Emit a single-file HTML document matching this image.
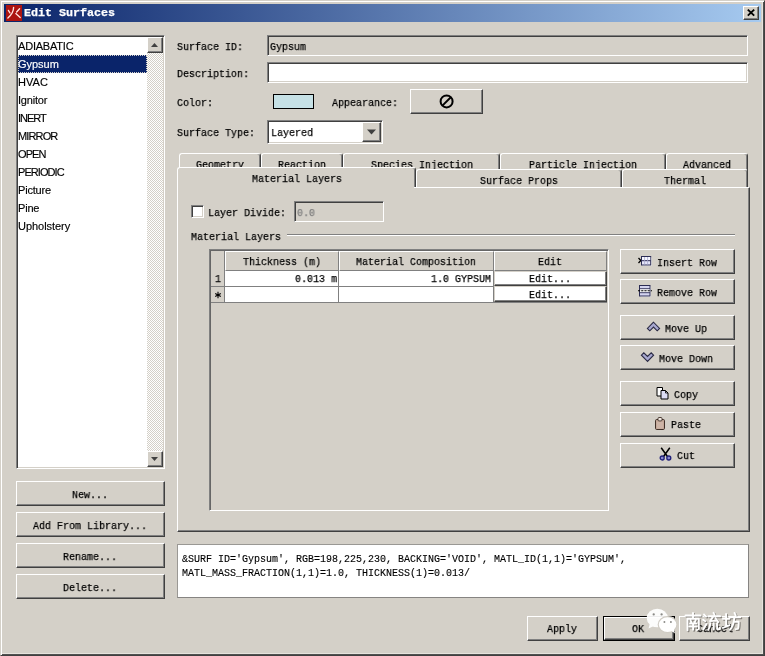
<!DOCTYPE html>
<html>
<head>
<meta charset="utf-8">
<title>Edit Surfaces</title>
<style>
*{margin:0;padding:0;box-sizing:border-box}
html,body{width:765px;height:656px;overflow:hidden;background:#d4d0c8}
body{position:relative;font-family:"Liberation Mono",monospace;font-size:13px;color:#000}
.a{position:absolute}
/* SimSun-like 6px-advance text: Liberation Mono 13px squeezed horizontally */
.t{will-change:transform;position:absolute;font:11.5px/14px "Liberation Mono",monospace;transform:scaleX(.8696);transform-origin:0 0;white-space:pre;color:#000;margin-top:1px;-webkit-text-stroke:.25px}
.tb{font-weight:bold;color:#fff;transform:scaleX(1.0145)}
.ts{font-size:10px;transform:none;-webkit-text-stroke:.12px}
.g{color:#808080}
.l{will-change:transform;position:absolute;font:11px/18px "Liberation Sans",sans-serif;white-space:pre;letter-spacing:-0.2px;color:#000;left:18px;-webkit-text-stroke:.15px}
.btn{position:absolute;background:#d4d0c8;border:1px solid;border-color:#fff #404040 #404040 #fff;box-shadow:inset -1px -1px 0 #808080}
.sunk{position:absolute;border:1px solid;border-color:#808080 #fff #fff #808080;box-shadow:inset 1px 1px 0 #404040,inset -1px -1px 0 #d4d0c8;background:#fff}
.tab{position:absolute;background:#d4d0c8;border:1px solid;border-color:#fff #404040 transparent #fff;border-bottom:0;border-radius:3px 3px 0 0;box-shadow:inset -1px 0 0 #808080}
.ebtn{position:absolute;background:#fff;border:1px solid;border-color:#d4d0c8 #404040 #404040 #d4d0c8;box-shadow:inset -1px -1px 0 #808080}
.hd{position:absolute;background:#d4d0c8;border:1px solid;border-color:#fff #808080 #808080 #fff}
</style>
</head>
<body>
<!-- window frame -->
<div class="a" style="left:0;top:0;width:765px;height:656px;border:1px solid;border-color:#d4d0c8 #404040 #404040 #d4d0c8;box-shadow:inset 1px 1px 0 #fff,inset -1px -1px 0 #505050,inset -2px -2px 0 #e6e3dd"></div>
<!-- title bar -->
<div class="a" style="left:4px;top:4px;width:757px;height:18px;background:linear-gradient(90deg,#0a246a 0%,#a6caf0 100%)"></div>
<div class="a" style="left:6px;top:5px;width:16px;height:16px;background:#ac1410"></div>
<svg class="a" style="left:6px;top:5px" width="16" height="16" viewBox="0 0 16 16"><g stroke="#ffe4e0" stroke-width="1.35" fill="none" stroke-linecap="round"><path d="M7.6 2.3 C7.6 6.5 5.2 10.2 1.9 13"/><path d="M9.8 8.6 L14.2 12.6"/><path d="M2.4 5.4 L4 8"/><path d="M13.6 3.8 L10.6 7"/></g></svg>
<div class="t tb" style="left:24px;top:5px">Edit Surfaces</div>
<!-- close button -->
<div class="btn" style="left:743px;top:6px;width:16px;height:14px"></div>
<svg class="a" style="left:743px;top:6px" width="16" height="14" viewBox="0 0 16 14"><path d="M4.8 3.6 L11.2 9.6 M11.2 3.6 L4.8 9.6" stroke="#000" stroke-width="1.9" fill="none"/></svg>

<!-- list box -->
<div class="sunk" style="left:16px;top:35px;width:149px;height:434px"></div>
<div class="a" style="left:18px;top:55px;width:129px;height:18px;background:#0a246a;outline:1px dotted #d4d0c8;outline-offset:-1px"></div>
<div class="l" style="top:37px">ADIABATIC</div>
<div class="l" style="top:55px;color:#fff;letter-spacing:-.03px">Gypsum</div>
<div class="l" style="top:73px;letter-spacing:.05px">HVAC</div>
<div class="l" style="top:91px">Ignitor</div>
<div class="l" style="top:109px;letter-spacing:-1px">INERT</div>
<div class="l" style="top:127px;letter-spacing:-.87px">MIRROR</div>
<div class="l" style="top:145px;letter-spacing:-.9px">OPEN</div>
<div class="l" style="top:163px;letter-spacing:-.94px">PERIODIC</div>
<div class="l" style="top:181px">Picture</div>
<div class="l" style="top:199px">Pine</div>
<div class="l" style="top:217px;letter-spacing:-.04px">Upholstery</div>
<!-- scrollbar -->
<div class="a" style="left:147px;top:37px;width:16px;height:430px;background:repeating-conic-gradient(#fff 0% 25%,#d4d0c8 0% 50%) 0 0/2px 2px"></div>
<div class="btn" style="left:147px;top:37px;width:16px;height:16px"></div>
<svg class="a" style="left:147px;top:37px" width="16" height="16"><path d="M4 10 L11 10 L7.5 6 Z" fill="#404040"/></svg>
<div class="btn" style="left:147px;top:451px;width:16px;height:16px"></div>
<svg class="a" style="left:147px;top:451px" width="16" height="16"><path d="M4 6 L11 6 L7.5 10 Z" fill="#404040"/></svg>

<!-- left buttons -->
<div class="btn" style="left:16px;top:481px;width:149px;height:25px"></div>
<div class="t" style="left:72px;top:487px">New...</div>
<div class="btn" style="left:16px;top:512px;width:149px;height:25px"></div>
<div class="t" style="left:33px;top:518px">Add From Library...</div>
<div class="btn" style="left:16px;top:543px;width:149px;height:25px"></div>
<div class="t" style="left:63px;top:549px">Rename...</div>
<div class="btn" style="left:16px;top:574px;width:149px;height:25px"></div>
<div class="t" style="left:63px;top:580px">Delete...</div>

<!-- right form -->
<div class="t" style="left:177px;top:39px">Surface ID:</div>
<div class="sunk" style="left:267px;top:35px;width:481px;height:21px;background:#d4d0c8"></div>
<div class="t" style="left:270px;top:39px">Gypsum</div>
<div class="t" style="left:177px;top:66px">Description:</div>
<div class="sunk" style="left:267px;top:62px;width:481px;height:21px"></div>
<div class="t" style="left:177px;top:95px">Color:</div>
<div class="a" style="left:273px;top:94px;width:41px;height:15px;background:#c6e1e6;border:1px solid #000"></div>
<div class="t" style="left:332px;top:95px">Appearance:</div>
<div class="btn" style="left:410px;top:89px;width:73px;height:25px"></div>
<svg class="a" style="left:438px;top:93px" width="17" height="17" viewBox="0 0 17 17"><circle cx="8.6" cy="8.4" r="6" stroke="#000" stroke-width="2" fill="none"/><path d="M12.8 4.2 L4.4 12.6" stroke="#000" stroke-width="2"/></svg>
<div class="t" style="left:177px;top:125px">Surface Type:</div>
<div class="sunk" style="left:267px;top:120px;width:116px;height:24px"></div>
<div class="t" style="left:271px;top:125px">Layered</div>
<div class="btn" style="left:362px;top:122px;width:19px;height:20px"></div>
<svg class="a" style="left:362px;top:122px" width="19" height="20"><path d="M5 7.5 L14 7.5 L9.5 12.5 Z" fill="#404040"/></svg>

<!-- tabs back row -->
<div class="tab" style="left:179px;top:153px;width:82px;height:20px"></div>
<div class="tab" style="left:261px;top:153px;width:82px;height:20px"></div>
<div class="tab" style="left:343px;top:153px;width:157px;height:20px"></div>
<div class="tab" style="left:500px;top:153px;width:166px;height:20px"></div>
<div class="tab" style="left:666px;top:153px;width:82px;height:20px"></div>
<div class="t" style="left:196px;top:157px">Geometry</div>
<div class="t" style="left:278px;top:157px">Reaction</div>
<div class="t" style="left:371px;top:157px">Species Injection</div>
<div class="t" style="left:529px;top:157px">Particle Injection</div>
<div class="t" style="left:683px;top:157px">Advanced</div>
<!-- tabs front row -->
<div class="tab" style="left:416px;top:169px;width:206px;height:19px"></div>
<div class="tab" style="left:622px;top:169px;width:126px;height:19px"></div>
<!-- panel -->
<div class="a" style="left:177px;top:187px;width:573px;height:345px;background:#d4d0c8;border:1px solid;border-color:#fff #404040 #404040 #fff;box-shadow:inset -1px -1px 0 #808080"></div>
<div class="tab" style="left:177px;top:167px;width:239px;height:20px"></div>
<div class="a" style="left:178px;top:186px;width:236px;height:3px;background:#d4d0c8"></div>
<div class="t" style="left:252px;top:171px">Material Layers</div>
<div class="t" style="left:480px;top:173px">Surface Props</div>
<div class="t" style="left:664px;top:173px">Thermal</div>

<!-- panel contents -->
<div class="sunk" style="left:191px;top:205px;width:13px;height:13px"></div>
<div class="t" style="left:208px;top:205px">Layer Divide:</div>
<div class="sunk" style="left:294px;top:201px;width:90px;height:21px;background:#d4d0c8"></div>
<div class="t g" style="left:297px;top:205px">0.0</div>
<div class="t" style="left:191px;top:229px">Material Layers</div>
<div class="a" style="left:287px;top:234px;width:448px;height:2px;border-top:1px solid #808080;border-bottom:1px solid #fff"></div>

<!-- table -->
<div class="a" style="left:209px;top:249px;width:400px;height:262px;background:#d4d0c8;border:1px solid;border-color:#808080 #fff #fff #808080;box-shadow:inset 1px 1px 0 #666,inset -1px -1px 0 #d4d0c8"></div>
<div class="a" style="left:211px;top:251px;width:14px;height:52px;background:#d4d0c8;border-right:1px solid #808080;border-bottom:1px solid #808080"></div>
<div class="hd" style="left:225px;top:251px;width:114px;height:20px"></div>
<div class="hd" style="left:339px;top:251px;width:155px;height:20px"></div>
<div class="hd" style="left:494px;top:251px;width:113px;height:20px"></div>
<div class="a" style="left:225px;top:271px;width:269px;height:32px;background:#fff;border-right:1px solid #808080;border-bottom:1px solid #808080"></div>
<div class="a" style="left:225px;top:286px;width:269px;height:1px;background:#808080"></div>
<div class="a" style="left:338px;top:271px;width:1px;height:32px;background:#808080"></div>
<div class="a" style="left:211px;top:286px;width:14px;height:1px;background:#808080"></div>
<div class="a" style="left:494px;top:302px;width:113px;height:1px;background:#808080"></div>
<div class="ebtn" style="left:494px;top:271px;width:113px;height:15px"></div>
<div class="ebtn" style="left:494px;top:286px;width:113px;height:16px"></div>
<div class="t" style="left:243px;top:254px">Thickness (m)</div>
<div class="t" style="left:356px;top:254px">Material Composition</div>
<div class="t" style="left:538px;top:254px">Edit</div>
<div class="t" style="left:215px;top:271px">1</div>
<svg class="a" style="left:214px;top:291px" width="8" height="8" viewBox="0 0 8 8"><path d="M4 0.8 V7.2 M1.2 2.4 L6.8 5.6 M6.8 2.4 L1.2 5.6" stroke="#000" stroke-width="1.1" fill="none"/></svg>
<div class="t" style="left:295px;top:271px">0.013 m</div>
<div class="t" style="left:431px;top:271px">1.0 GYPSUM</div>
<div class="t" style="left:529px;top:271px">Edit...</div>
<div class="t" style="left:529px;top:287px">Edit...</div>

<!-- right buttons -->
<div class="btn" style="left:620px;top:249px;width:115px;height:25px"></div>
<svg class="a" style="left:637px;top:255px" width="16" height="12" viewBox="0 0 16 12"><rect x="5.5" y="2.5" width="9.2" height="8.5" fill="#fff" opacity=".8"/><path d="M1.5 3 L3.8 5.5 L1.5 8" stroke="#000" stroke-width="1.3" fill="none"/><rect x="4.5" y="1.5" width="9.2" height="8.5" fill="#e4e4f8" stroke="#2c2c54" stroke-width="1"/><rect x="5" y="2" width="8.2" height="3.2" fill="#f8f8ff"/><path d="M4.5 5.7 H13.7" stroke="#2c2c54" stroke-width="1"/><path d="M7.6 2 V9.5 M10.6 2 V9.5" stroke="#a8a8d0" stroke-width=".8"/></svg>
<div class="t" style="left:657px;top:255px">Insert Row</div>
<div class="btn" style="left:620px;top:279px;width:115px;height:25px"></div>
<svg class="a" style="left:637px;top:284px" width="16" height="14" viewBox="0 0 16 14"><rect x="3.5" y="2.5" width="10.5" height="10.5" fill="#fff" opacity=".8"/><rect x="2.5" y="1.5" width="10.5" height="10.5" fill="#d4d4f0" stroke="#2c2c54" stroke-width="1"/><rect x="3" y="5" width="9.5" height="3.4" fill="#fff"/><path d="M2.5 4.7 H13 M2.5 8.7 H13" stroke="#2c2c54" stroke-width=".9"/><path d="M1 6.7 H15" stroke="#000" stroke-width="1.1" stroke-dasharray="2.2 1"/></svg>
<div class="t" style="left:657px;top:285px">Remove Row</div>
<div class="btn" style="left:620px;top:315px;width:115px;height:25px"></div>
<svg class="a" style="left:645px;top:320px" width="17" height="13" viewBox="0 0 17 13"><path d="M8.5 2.2 L2.4 8.4 L4.8 10.8 L8.5 7.1 L12.2 10.8 L14.6 8.4 Z" fill="#a8a8d0" stroke="#2a2a44" stroke-width="1.1" stroke-linejoin="miter"/></svg>
<div class="t" style="left:665px;top:321px">Move Up</div>
<div class="btn" style="left:620px;top:345px;width:115px;height:25px"></div>
<svg class="a" style="left:639px;top:350px" width="17" height="13" viewBox="0 0 17 13"><path d="M8.5 11.4 L2.4 5.2 L4.8 2.8 L8.5 6.5 L12.2 2.8 L14.6 5.2 Z" fill="#a8a8d0" stroke="#2a2a44" stroke-width="1.1" stroke-linejoin="miter"/></svg>
<div class="t" style="left:659px;top:351px">Move Down</div>
<div class="btn" style="left:620px;top:381px;width:115px;height:25px"></div>
<svg class="a" style="left:655px;top:385px" width="16" height="16" viewBox="0 0 16 16"><path d="M2 2.5 H7.5 V11 H2 Z" fill="#fff" stroke="#000" stroke-width="1"/><path d="M6 5.5 H10.5 L13 8 V14 H6 Z" fill="#dcdcf4" stroke="#000" stroke-width="1"/><path d="M10.5 5.5 V8 H13" fill="none" stroke="#000" stroke-width=".8"/></svg>
<div class="t" style="left:674px;top:387px">Copy</div>
<div class="btn" style="left:620px;top:412px;width:115px;height:25px"></div>
<svg class="a" style="left:654px;top:416px" width="14" height="16" viewBox="0 0 14 16"><rect x="1.5" y="3.5" width="9" height="10" rx="1.2" fill="#c4a898" stroke="#403028" stroke-width="1"/><rect x="4" y="1.5" width="4" height="3.4" rx="1" fill="#f0e8e0" stroke="#403028" stroke-width=".9"/><rect x="3" y="6" width="6" height="6.5" fill="#cdb4a6"/></svg>
<div class="t" style="left:671px;top:417px">Paste</div>
<div class="btn" style="left:620px;top:443px;width:115px;height:25px"></div>
<svg class="a" style="left:658px;top:446px" width="16" height="16" viewBox="0 0 16 16"><path d="M3.2 1.8 L9.8 11 M11.8 1.8 L5.2 11" stroke="#000" stroke-width="1.5" fill="none"/><circle cx="4.2" cy="12" r="2" fill="#8888d0" stroke="#20207a" stroke-width="1.3"/><circle cx="10.8" cy="12" r="2" fill="#8888d0" stroke="#20207a" stroke-width="1.3"/></svg>
<div class="t" style="left:677px;top:448px">Cut</div>

<!-- text area -->
<div class="a" style="left:177px;top:544px;width:572px;height:54px;background:#fff;border:1px solid;border-color:#9a9894 #868482 #868482 #9a9894"></div>
<div class="t ts" style="left:182px;top:552px">&amp;SURF ID='Gypsum', RGB=198,225,230, BACKING='VOID', MATL_ID(1,1)='GYPSUM',</div>
<div class="t ts" style="left:182px;top:566px">MATL_MASS_FRACTION(1,1)=1.0, THICKNESS(1)=0.013/</div>

<!-- bottom buttons -->
<div class="btn" style="left:527px;top:616px;width:71px;height:25px"></div>
<div class="t" style="left:547px;top:621px">Apply</div>
<div class="a" style="left:603px;top:616px;width:72px;height:25px;border:1px solid #000"></div>
<div class="btn" style="left:604px;top:617px;width:70px;height:23px"></div>
<div class="t" style="left:632px;top:621px">OK</div>
<div class="btn" style="left:679px;top:616px;width:71px;height:25px"></div>
<div class="t" style="left:697px;top:621px">Cancel</div>
<!-- watermark -->
<svg class="a" style="left:640px;top:600px" width="112" height="50" viewBox="0 0 112 50">
<g fill="#fff" opacity=".93">
<ellipse cx="17.3" cy="18" rx="10.6" ry="9.3"/>
<path d="M10 23 L8.5 28.5 L15 25.5 Z"/>
</g>
<ellipse cx="27.6" cy="24.6" rx="9.4" ry="8" fill="#fff" stroke="#d0ccc4" stroke-width="1.2"/>
<path d="M31 30.5 L35 33.5 L33.8 28.5 Z" fill="#fff"/>
<g fill="#8a8a86"><circle cx="13.7" cy="14.4" r="1.15"/><circle cx="21.6" cy="14.4" r="1.15"/><circle cx="24.4" cy="22" r=".95"/><circle cx="30.9" cy="22" r=".95"/></g>
<g transform="translate(1,1)" stroke="#3c3a36" stroke-width="2" opacity=".55" fill="none" stroke-linecap="round" stroke-linejoin="round">
<g transform="translate(44,12.5)"><path d="M1.5 3 H16.5 M9 .5 V6 M3.5 17.8 V6.2 H14.8 V16.5 L13 17.5 M6.5 7.8 L7.5 9.8 M11.7 7.6 L10.6 9.8 M6 11 H12.3 M5.5 14 H12.7 M9.1 11 V17.3"/></g>
<g transform="translate(62.5,12.5)"><path d="M1.5 2 L3.6 4 M.6 7.2 L2.8 8.8 M.8 17 L4 11.5 M11 .3 L12 2.4 M6 3.8 H17.6 M10.8 3.9 L7.6 8.6 L14.8 8.1 M13 5.8 L15.8 9.6 M7.8 10.8 Q7.8 15 5.6 17.4 M11.2 10.8 V17 M14.6 10.8 V16.6 H17.4 V15"/></g>
<g transform="translate(82.5,12.5)"><path d="M.5 6.2 H6.8 M3.6 1.5 V14 M.4 15.4 L7 12.6 M12 .4 L13.2 3 M7.6 4.8 H17.8 M11.8 4.8 Q11.6 12.5 7.4 17.4 M11.6 9.2 H16.2 Q16.2 15 15.4 16.4 L13.4 16.6"/></g>
</g>
<g stroke="#fff" stroke-width="1.9" fill="none" stroke-linecap="round" stroke-linejoin="round">
<g transform="translate(44,12.5)"><path d="M1.5 3 H16.5 M9 .5 V6 M3.5 17.8 V6.2 H14.8 V16.5 L13 17.5 M6.5 7.8 L7.5 9.8 M11.7 7.6 L10.6 9.8 M6 11 H12.3 M5.5 14 H12.7 M9.1 11 V17.3"/></g>
<g transform="translate(62.5,12.5)"><path d="M1.5 2 L3.6 4 M.6 7.2 L2.8 8.8 M.8 17 L4 11.5 M11 .3 L12 2.4 M6 3.8 H17.6 M10.8 3.9 L7.6 8.6 L14.8 8.1 M13 5.8 L15.8 9.6 M7.8 10.8 Q7.8 15 5.6 17.4 M11.2 10.8 V17 M14.6 10.8 V16.6 H17.4 V15"/></g>
<g transform="translate(82.5,12.5)"><path d="M.5 6.2 H6.8 M3.6 1.5 V14 M.4 15.4 L7 12.6 M12 .4 L13.2 3 M7.6 4.8 H17.8 M11.8 4.8 Q11.6 12.5 7.4 17.4 M11.6 9.2 H16.2 Q16.2 15 15.4 16.4 L13.4 16.6"/></g>
</g>
</svg>
</body>
</html>
